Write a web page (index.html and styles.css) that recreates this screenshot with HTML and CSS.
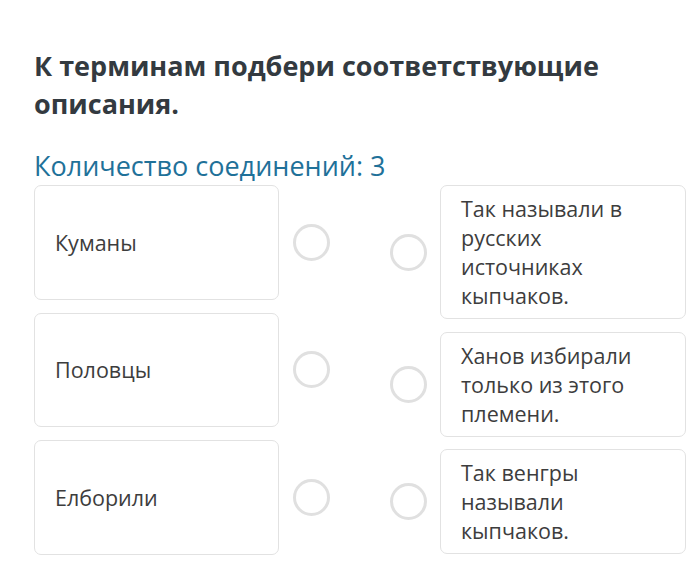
FILE: index.html
```html
<!DOCTYPE html>
<html lang="ru">
<head>
<meta charset="utf-8">
<link rel="stylesheet" href="styles.css">
</head>
<body>
<main class="task">
  <h1 class="title">К терминам подбери соответствующие описания.</h1>
  <p class="count">Количество соединений: 3</p>
  <div class="board">
    <div class="col col-left">
      <div class="row">
        <div class="card card-term">Куманы</div>
        <span class="dot"></span>
      </div>
      <div class="row">
        <div class="card card-term">Половцы</div>
        <span class="dot"></span>
      </div>
      <div class="row">
        <div class="card card-term">Елборили</div>
        <span class="dot"></span>
      </div>
    </div>
    <div class="col col-right">
      <div class="row">
        <span class="dot"></span>
        <div class="card card-desc">Так называли в русских источниках кыпчаков.</div>
      </div>
      <div class="row">
        <span class="dot"></span>
        <div class="card card-desc">Ханов избирали только из этого племени.</div>
      </div>
      <div class="row">
        <span class="dot"></span>
        <div class="card card-desc">Так венгры называли кыпчаков.</div>
      </div>
    </div>
  </div>
</main>
</body>
</html>
```
FILE: styles.css
```css
* { box-sizing: border-box; }
html, body { margin: 0; padding: 0; background: #fff; }
body {
  font-family: "Open Sans", "Noto Sans", "Liberation Sans", sans-serif;
  color: #3b3b3b;
}
.task {
  padding: 47px 9px 0 34px;
}
.title {
  margin: 0;
  font-size: 27px;
  line-height: 38px;
  font-weight: 700;
  color: #333a40;
  max-width: 600px;
}
.count {
  margin: 25px 0 0;
  font-size: 27px;
  line-height: 36px;
  color: #1f7199;
}
.board {
  display: flex;
  margin-top: 1px;
  gap: 60px;
}
.col {
  display: flex;
  flex-direction: column;
  gap: 13px;
}
.col-right { gap: 12.5px; }
.row {
  display: flex;
  align-items: center;
}
.card {
  width: 246px;
  background: #fff;
  border: 1px solid #e2e2e2;
  border-radius: 7px;
  font-size: 21.5px;
  color: #3d3d3d;
}
.card-term {
  width: 245px;
  height: 114.5px;
  display: flex;
  align-items: center;
  padding: 0 20px;
}
.card-desc {
  padding: 8px 20px;
  line-height: 29px;
}
.dot {
  width: 37px;
  height: 37px;
  border: 3px solid #e0e0e0;
  border-radius: 50%;
  flex: none;
}
.col-left .dot { margin-left: 14px; }
.col-right .dot { margin-right: 13px; }
```
